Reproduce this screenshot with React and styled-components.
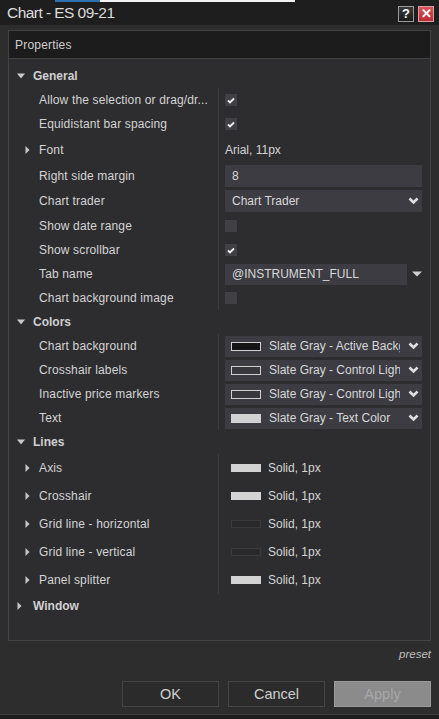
import React from 'react';
import styled, { createGlobalStyle } from 'styled-components';

const GlobalStyle = createGlobalStyle`
    html, body {
        margin: 0;
        padding: 0;
        background-color: #1e1e1e;
    }
    * {
        box-sizing: border-box;
    }
`;

const Window = styled.div`
    width: 439px;
    height: 719px;
    display: flex;
    flex-direction: column;
    background-color: #1e1e1e;
    font-family: "Liberation Sans", Arial, sans-serif;
    color: #d4d4d4;
    overflow: hidden;
`;

const TitleBar = styled.div`
    position: relative;
    height: 25px;
    flex-shrink: 0;
    display: flex;
    align-items: center;
    justify-content: space-between;
    padding: 0 5px 0 7px;
    background-color: #1e1e1e;
`;

const TopStrip = styled.div`
    position: absolute;
    top: 0;
    left: 55px;
    width: 240px;
    height: 2px;
    background: linear-gradient(to right, #2f6fb4 0 45px, #f2f2f2 45px 100%);
`;

const Title = styled.div`
    font-size: 15.5px;
    letter-spacing: -0.55px;
    color: #dcdcdc;
    padding-top: 1px;
`;

const TitleButtons = styled.div`
    display: flex;
    gap: 4px;
    padding-top: 2px;
`;

const TitleButton = styled.div`
    width: 16px;
    height: 16px;
    display: flex;
    align-items: center;
    justify-content: center;
    border: 1px solid ${props => props.close ? '#d8a0a0' : '#9a9a9a'};
    background: ${props => props.close
        ? 'linear-gradient(#d9545a, #b82e35)'
        : 'linear-gradient(#3a3a3a, #1a1a1a)'};
    color: #fff;
    font-size: 13px;
    font-weight: bold;
    line-height: 1;
`;

const Body = styled.div`
    height: 690px;
    display: flex;
    flex-direction: column;
    padding: 5px 8px 0 8px;
    background-color: #2d2d2d;
    border-left: 1px solid #3b3b3b;
    border-right: 1px solid #3b3b3b;
    border-bottom: 1px solid #3f3f3f;
    margin: 0 -1px;
`;

const Panel = styled.div`
    height: 611px;
    flex-shrink: 0;
    display: flex;
    flex-direction: column;
    border: 1px solid #434343;
    background-color: #2d2d30;
`;

const PanelHeader = styled.div`
    height: 28px;
    flex-shrink: 0;
    display: flex;
    align-items: center;
    padding-left: 6px;
    background-color: #1c1c1c;
    border-bottom: 1px solid #414141;
    font-size: 12px;
    letter-spacing: 0.2px;
    color: #cfcfcf;
`;

const PropertyList = styled.div`
    display: flex;
    flex-direction: column;
    padding-top: 5px;
`;

const GroupHeader = styled.div`
    height: 24px;
    display: flex;
    align-items: center;
    padding-left: 8px;
    font-size: 12px;
    font-weight: bold;
    color: #d0d0d0;
`;

const GroupToggle = styled.span`
    width: 16px;
    display: flex;
    align-items: center;
`;

const Row = styled.div`
    height: ${props => props.h || 24}px;
    display: grid;
    grid-template-columns: 210px 1fr;
`;

const LabelCell = styled.div`
    display: flex;
    align-items: center;
    padding-left: 16px;
    border-right: 1px solid #3b3b3e;
    font-size: 12px;
    letter-spacing: 0.15px;
    color: #d4d4d4;
    white-space: nowrap;
    overflow: hidden;
`;

const RowToggle = styled.span`
    width: 14px;
    display: flex;
    align-items: center;
`;

const ValueCell = styled.div`
    display: flex;
    align-items: center;
    padding: 0 8px 0 6px;
    font-size: 12px;
    color: #d4d4d4;
    min-width: 0;
`;

const CheckBox = styled.div`
    width: 12px;
    height: 12px;
    display: flex;
    align-items: center;
    justify-content: center;
    background-color: #404045;
`;

const Field = styled.div`
    flex: 1;
    min-width: 0;
    height: ${props => props.h || 22}px;
    display: flex;
    align-items: center;
    padding: 0 3px 0 7px;
    background-color: #3c3c42;
    font-size: 12px;
    color: #d8d8d8;
`;

const FieldText = styled.span`
    flex: 1;
    min-width: 0;
    white-space: nowrap;
    overflow: hidden;
`;

const ColorField = styled(Field)`
    padding-left: 6px;
    gap: 8px;
`;

const Swatch = styled.span`
    width: 30px;
    height: ${props => props.h || 9}px;
    flex-shrink: 0;
    background-color: ${props => props.fill};
    border: 1px solid ${props => props.edge || props.fill};
`;

const LineValue = styled.div`
    display: flex;
    align-items: center;
    gap: 7px;
    padding-left: 6px;
`;

const TabDrop = styled.span`
    width: 15px;
    display: flex;
    justify-content: flex-end;
`;

const PresetRow = styled.div`
    height: 26px;
    flex-shrink: 0;
    display: flex;
    align-items: center;
    justify-content: flex-end;
    font-size: 11.5px;
    font-style: italic;
    color: #bdbdbd;
`;

const ButtonRow = styled.div`
    margin-top: 14px;
    display: flex;
    justify-content: flex-end;
    gap: 9px;
`;

const Button = styled.div`
    width: 97px;
    height: 26px;
    display: flex;
    align-items: center;
    justify-content: center;
    border: 1px solid ${props => props.disabled ? '#9a9a9a' : '#454545'};
    background-color: ${props => props.disabled ? '#8b8b8b' : '#2b2b2b'};
    color: ${props => props.disabled ? '#a8a8a8' : '#cfcfcf'};
    font-size: 14.5px;
`;

const Expanded = () => (
    <svg width="8" height="6" viewBox="0 0 8 6">
        <polygon points="0,0.5 8,0.5 4,5.5" fill="#c8c8c8" />
    </svg>
);

const Collapsed = () => (
    <svg width="5" height="8" viewBox="0 0 5 8">
        <polygon points="0.5,0 4.5,4 0.5,8" fill="#c8c8c8" />
    </svg>
);

const Check = () => (
    <svg width="8" height="7" viewBox="0 0 8 7">
        <polyline points="1,3.5 3,5.5 7,1.5" fill="none" stroke="#f0f0f0" strokeWidth="1.8" />
    </svg>
);

const Chevron = () => (
    <svg width="11" height="8" viewBox="0 0 11 8">
        <polyline points="1.5,1.5 5.5,5.5 9.5,1.5" fill="none" stroke="#dedede" strokeWidth="2.6" />
    </svg>
);

const DropTriangle = () => (
    <svg width="10" height="6" viewBox="0 0 10 6">
        <polygon points="0,0.5 10,0.5 5,5.5" fill="#cfcfcf" />
    </svg>
);

function PropertyRow({ label, expandable, h, children }) {
    return (
        <Row h={h}>
            <LabelCell>
                <RowToggle>{expandable && <Collapsed />}</RowToggle>
                {label}
            </LabelCell>
            <ValueCell>{children}</ValueCell>
        </Row>
    );
}

function Group({ title, open = true, children }) {
    return (
        <>
            <GroupHeader>
                <GroupToggle>{open ? <Expanded /> : <Collapsed />}</GroupToggle>
                {title}
            </GroupHeader>
            {open && children}
        </>
    );
}

const colorRows = [
    { label: 'Chart background', text: 'Slate Gray - Active Background', fill: '#151515', edge: '#d0d0d0' },
    { label: 'Crosshair labels', text: 'Slate Gray - Control Light', fill: '#3a3a3e', edge: '#cfcfcf' },
    { label: 'Inactive price markers', text: 'Slate Gray - Control Light', fill: '#3a3a3e', edge: '#cfcfcf' },
    { label: 'Text', text: 'Slate Gray - Text Color', fill: '#d2d2d2' },
];

const lineRows = [
    { label: 'Axis', fill: '#d3d3d3' },
    { label: 'Crosshair', fill: '#d3d3d3' },
    { label: 'Grid line - horizontal', fill: '#29292b', edge: '#3a3a3c' },
    { label: 'Grid line - vertical', fill: '#29292b', edge: '#3a3a3c' },
    { label: 'Panel splitter', fill: '#d3d3d3' },
];

export default function App() {
    return (
        <Window>
            <GlobalStyle />
            <TitleBar>
                <TopStrip />
                <Title>Chart - ES 09-21</Title>
                <TitleButtons>
                    <TitleButton>?</TitleButton>
                    <TitleButton close>✕</TitleButton>
                </TitleButtons>
            </TitleBar>

            <Body>
                <Panel>
                    <PanelHeader>Properties</PanelHeader>
                    <PropertyList>
                        <Group title="General">
                            <PropertyRow label="Allow the selection or drag/dr...">
                                <CheckBox><Check /></CheckBox>
                            </PropertyRow>
                            <PropertyRow label="Equidistant bar spacing">
                                <CheckBox><Check /></CheckBox>
                            </PropertyRow>
                            <PropertyRow label="Font" expandable h={27}>
                                Arial, 11px
                            </PropertyRow>
                            <PropertyRow label="Right side margin" h={26}>
                                <Field><FieldText>8</FieldText></Field>
                            </PropertyRow>
                            <PropertyRow label="Chart trader">
                                <Field>
                                    <FieldText>Chart Trader</FieldText>
                                    <Chevron />
                                </Field>
                            </PropertyRow>
                            <PropertyRow label="Show date range" h={25}>
                                <CheckBox />
                            </PropertyRow>
                            <PropertyRow label="Show scrollbar">
                                <CheckBox><Check /></CheckBox>
                            </PropertyRow>
                            <PropertyRow label="Tab name">
                                <Field h={21}><FieldText>@INSTRUMENT_FULL</FieldText></Field>
                                <TabDrop><DropTriangle /></TabDrop>
                            </PropertyRow>
                            <PropertyRow label="Chart background image">
                                <CheckBox />
                            </PropertyRow>
                        </Group>

                        <Group title="Colors">
                            {colorRows.map(item => (
                                <PropertyRow key={item.label} label={item.label}>
                                    <ColorField h={21}>
                                        <Swatch fill={item.fill} edge={item.edge} />
                                        <FieldText>{item.text}</FieldText>
                                        <Chevron />
                                    </ColorField>
                                </PropertyRow>
                            ))}
                        </Group>

                        <Group title="Lines">
                            {lineRows.map(item => (
                                <PropertyRow key={item.label} label={item.label} expandable h={28}>
                                    <LineValue>
                                        <Swatch fill={item.fill} edge={item.edge} h={8} />
                                        Solid, 1px
                                    </LineValue>
                                </PropertyRow>
                            ))}
                        </Group>

                        <Group title="Window" open={false} />
                    </PropertyList>
                </Panel>

                <PresetRow>preset</PresetRow>

                <ButtonRow>
                    <Button>OK</Button>
                    <Button>Cancel</Button>
                    <Button disabled>Apply</Button>
                </ButtonRow>
            </Body>
        </Window>
    );
}
